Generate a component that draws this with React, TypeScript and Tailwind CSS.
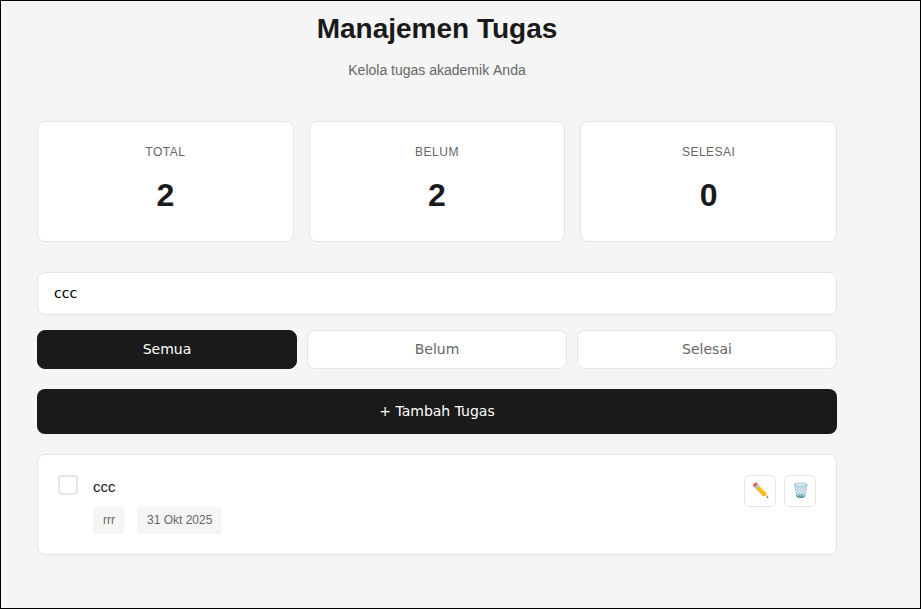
const stats = [
  { label: "TOTAL", value: 2 },
  { label: "BELUM", value: 2 },
  { label: "SELESAI", value: 0 },
];

const card = "rounded-lg border border-[#e5e5e5] bg-white";
const iconButton = "flex size-8 items-center justify-center rounded-md border border-[#e5e5e5] bg-white pb-0.5 text-sm";

export default function App() {
  return (
    <div className="h-[609px] w-[921px] overflow-hidden border border-black bg-[#f5f5f5] font-['Liberation_Sans',sans-serif] text-[#1a1a1a]">
      <div className="ml-9 w-[800px]">
        <header className="pt-3 text-center">
          <h1 className="text-[28px] leading-8 font-bold">Manajemen Tugas</h1>
          <p className="mt-[17px] text-sm leading-4 text-[#666] [font-kerning:none]">Kelola tugas akademik Anda</p>
        </header>

        <section className="mt-[43px] grid grid-cols-3 gap-[15px]">
          {stats.map((s) => (
            <div key={s.label} className={`${card} h-[121px] pt-[23px] text-center`}>
              <div className="text-xs leading-[14px] tracking-[0.5px] text-[#666]">{s.label}</div>
              <div className="mt-[18px] text-[32px] leading-9 font-bold">{s.value}</div>
            </div>
          ))}
        </section>

        <input
          className={`${card} mt-[30px] block h-[43px] w-full px-4 pb-0.5 font-['DejaVu_Sans',sans-serif] text-sm text-black outline-none`}
          defaultValue="ccc"
        />

        <div className="mt-[15px] grid grid-cols-3 gap-2.5 font-['DejaVu_Sans',sans-serif] text-sm">
          <button className="h-[39px] rounded-lg border border-[#1a1a1a] bg-[#1a1a1a] pb-0.5 text-white">Semua</button>
          <button className={`${card} h-[39px] pb-0.5 text-[#666]`}>Belum</button>
          <button className={`${card} h-[39px] pb-0.5 text-[#666]`}>Selesai</button>
        </div>

        <button className="mt-5 block h-[45px] w-full rounded-lg bg-[#1a1a1a] pb-0.5 font-['DejaVu_Sans',sans-serif] text-sm text-white">
          + Tambah Tugas
        </button>

        <article className={`${card} mt-5 flex h-[101px] items-start p-5`}>
          <div className="size-5 rounded-[4px] border-2 border-[#e5e5e5]" />
          <div className="ml-[15px] flex-1 pt-[3px]">
            <h3 className="text-[15px] leading-[17px]">ccc</h3>
            <div className="mt-3 flex gap-3 text-xs leading-[27px] text-[#666]">
              <span className="rounded-[4px] bg-[#f5f5f5] px-2.5">rrr</span>
              <span className="rounded-[4px] bg-[#f5f5f5] px-2.5">31 Okt 2025</span>
            </div>
          </div>
          <div className="flex gap-2">
            <button className={iconButton} aria-label="Edit">✏️</button>
            <button className={iconButton} aria-label="Hapus">🗑️</button>
          </div>
        </article>
      </div>
    </div>
  );
}
